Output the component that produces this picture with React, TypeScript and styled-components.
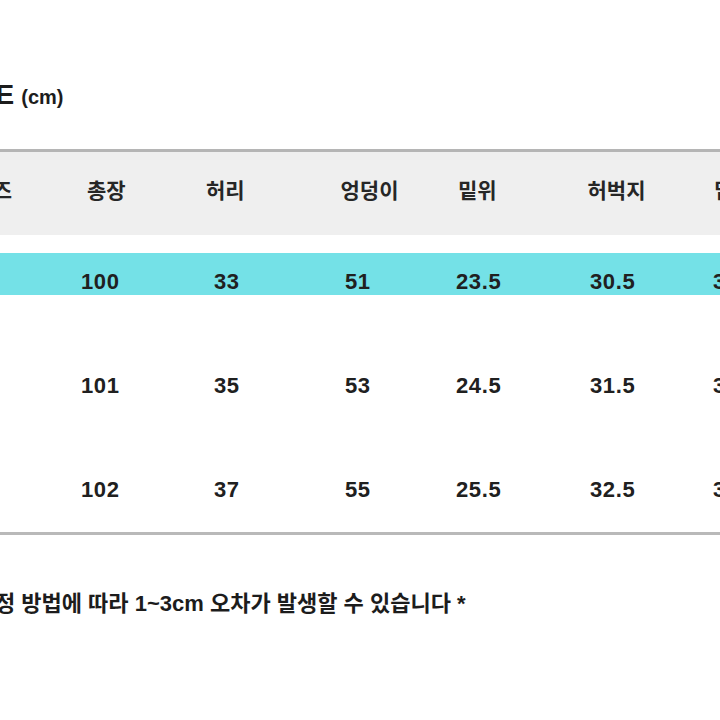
import React from "react";
import styled, { createGlobalStyle } from "styled-components";

const GlobalStyle = createGlobalStyle`
  html, body {
    margin: 0;
    padding: 0;
    background: #ffffff;
    overflow: hidden;
  }
`;

const Page = styled.div`
  width: 720px;
  height: 720px;
  overflow: hidden;
  background: #ffffff;
  font-family: "Liberation Sans", "Noto Sans CJK KR", sans-serif;
  color: #1f1f1f;
`;

const Sheet = styled.div`
  margin-left: -46px;
  width: 840px;
  padding-top: 81px;
  display: flex;
  flex-direction: column;
`;

const Title = styled.h1`
  margin: 0 0 0 -2px;
  display: flex;
  align-items: baseline;
  gap: 7px;
  font-size: 28px;
  line-height: 28px;
  font-weight: 700;
  color: #1c1c1c;
`;

const Unit = styled.span`
  font-size: 20px;
  font-weight: 700;
`;

const Table = styled.div`
  margin-top: 38px;
  border-top: 3px solid #b5b5b5;
  border-bottom: 3px solid #b9b9b9;
  display: flex;
  flex-direction: column;
`;

const HeadRow = styled.div<{ $cols: string }>`
  display: grid;
  grid-template-columns: ${(p) => p.$cols};
  align-items: center;
  box-sizing: border-box;
  height: 83px;
  padding-bottom: 6px;
  background: #efefef;
  font-size: 21px;
  line-height: 21px;
  font-weight: 700;
  color: #262626;
`;

const BodyRow = styled.div<{ $cols: string; $highlight?: boolean }>`
  display: grid;
  grid-template-columns: ${(p) => p.$cols};
  padding: 36px 0 46px;
  font-size: 22px;
  line-height: 22px;
  font-weight: 700;
  letter-spacing: 0.6px;
  color: #202020;
  background: ${(p) =>
    p.$highlight
      ? "linear-gradient(to bottom, transparent 18px, #74e1e7 18px, #74e1e7 60px, transparent 60px)"
      : "transparent"};

  &:last-child {
    padding-bottom: 31px;
  }
`;

const Cell = styled.span`
  white-space: nowrap;
`;

const Note = styled.p`
  margin: 58px 0 0 6px;
  font-size: 22px;
  line-height: 22px;
  font-weight: 700;
  color: #1c1c1c;
  white-space: nowrap;
`;

const headCols = "133px 119px 134.5px 117.5px 129.5px 126.5px 1fr";
const bodyCols = "127px 133px 131px 111px 134px 123px 1fr";

const headers = ["사이즈", "총장", "허리", "엉덩이", "밑위", "허벅지", "밑단"];

const rows = [
  { size: "S", values: ["100", "33", "51", "23.5", "30.5", "33"], highlight: true },
  { size: "M", values: ["101", "35", "53", "24.5", "31.5", "34"], highlight: false },
  { size: "L", values: ["102", "37", "55", "25.5", "32.5", "35"], highlight: false },
];

export default function App() {
  return (
    <>
      <GlobalStyle />
      <Page>
        <Sheet>
          <Title>
            SIZE <Unit>(cm)</Unit>
          </Title>
          <Table>
            <HeadRow $cols={headCols}>
              {headers.map((h) => (
                <Cell key={h}>{h}</Cell>
              ))}
            </HeadRow>
            {rows.map((r) => (
              <BodyRow key={r.size} $cols={bodyCols} $highlight={r.highlight}>
                <Cell>{r.size}</Cell>
                {r.values.map((v, i) => (
                  <Cell key={i}>{v}</Cell>
                ))}
              </BodyRow>
            ))}
          </Table>
          <Note>* 측정 방법에 따라 1~3cm 오차가 발생할 수 있습니다 *</Note>
        </Sheet>
      </Page>
    </>
  );
}
